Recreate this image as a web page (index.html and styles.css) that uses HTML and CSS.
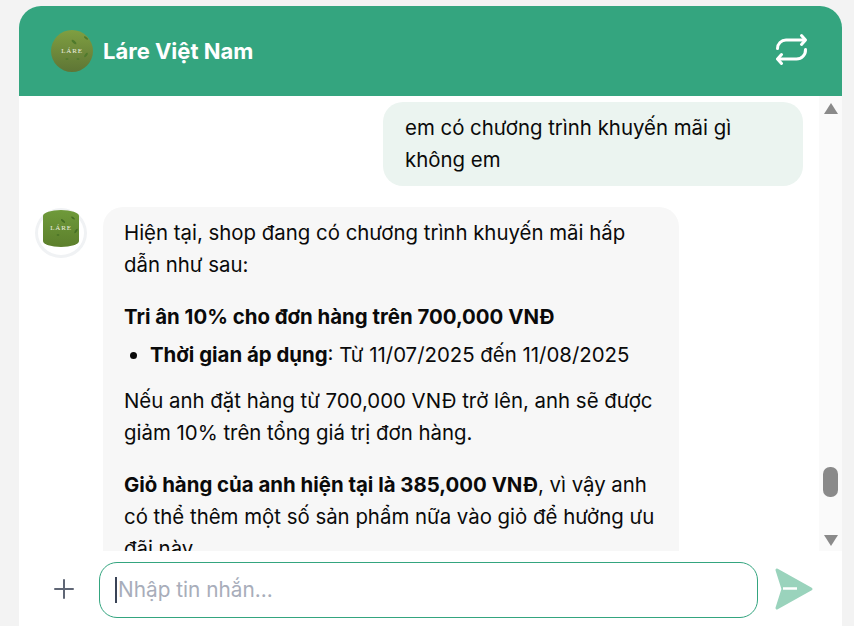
FILE: index.html
```html
<!DOCTYPE html>
<html lang="vi">
<head>
  <meta charset="UTF-8">
  <title>Láre Việt Nam</title>
  <link rel="stylesheet" href="styles.css">
</head>
<body>
  <div class="chat">
    <div class="header">
      <div class="brand">
        <svg class="logo" width="42" height="42" viewBox="0 0 42 42">
          <defs>
            <linearGradient id="logoBg" x1="0" y1="0" x2="0" y2="1">
              <stop offset="0" stop-color="#7f9f41"/>
              <stop offset="1" stop-color="#5e7535"/>
            </linearGradient>
          </defs>
          <circle cx="21" cy="21" r="21" fill="url(#logoBg)"/>
          <ellipse cx="23" cy="12" rx="3" ry="1.2" fill="#4f7a2c" transform="rotate(40 23 12)"/>
          <ellipse cx="35" cy="8" rx="2.4" ry="1" fill="#4f7a2c" transform="rotate(35 35 8)"/>
          <ellipse cx="35" cy="25" rx="2.6" ry="1.1" fill="#4f7a2c" transform="rotate(-50 35 25)"/>
          <ellipse cx="16" cy="29" rx="1.6" ry="0.8" fill="#4f7a2c"/>
          <ellipse cx="27" cy="29" rx="1.6" ry="0.8" fill="#4f7a2c"/>
          <text class="logo-text" x="21" y="23" text-anchor="middle">LÁRE</text>
        </svg>
        <div class="name">Láre Việt Nam</div>
      </div>
      <svg class="refresh" width="34" height="32" viewBox="0 0 34 32" fill="none" stroke="#fff" stroke-width="3" stroke-linecap="round" stroke-linejoin="round">
        <path d="M25.500 2.500l4 4.500-4 4.500"/>
        <path d="M1.500 15.500a8.500 8.500 0 0 1 8.500-8.500h18.500"/>
        <path d="M5.500 21.500l-4 4.500 4 4.500"/>
        <path d="M29.500 16.500a9 9 0 0 1-9 9.500H2.500"/>
      </svg>
    </div>
    <div class="body">
      <div class="messages">
        <div class="msg-user">em có chương trình khuyến mãi gì không em</div>
        <div class="msg-bot">
          <div class="avatar">
            <svg class="avatar-img" width="36" height="37" viewBox="0 0 36 37">
              <defs>
                <linearGradient id="avatarBg" x1="0" y1="0" x2="0" y2="1">
                  <stop offset="0" stop-color="#6f9a3a"/>
                  <stop offset="1" stop-color="#5c7f2c"/>
                </linearGradient>
              </defs>
              <rect width="36" height="37" fill="url(#avatarBg)"/>
              <ellipse cx="20" cy="11" rx="2.600" ry="1" fill="#456f25" transform="rotate(40 20 11)"/>
              <ellipse cx="30" cy="8" rx="2.200" ry="0.900" fill="#456f25" transform="rotate(35 30 8)"/>
              <ellipse cx="33" cy="21" rx="2.600" ry="1" fill="#456f25" transform="rotate(-55 33 21)"/>
              <ellipse cx="15" cy="25" rx="1.400" ry="0.700" fill="#456f25"/>
              <text class="logo-text" x="18" y="20" text-anchor="middle">LÁRE</text>
            </svg>
          </div>
          <div class="bubble">
            <p>Hiện tại, shop đang có chương trình khuyến mãi hấp dẫn như sau:</p>
            <p class="title"><strong>Tri ân 10% cho đơn hàng trên 700,000 VNĐ</strong></p>
            <ul>
              <li><strong>Thời gian áp dụng</strong>: Từ 11/07/2025 đến 11/08/2025</li>
            </ul>
            <p>Nếu anh đặt hàng từ 700,000 VNĐ trở lên, anh sẽ được giảm 10% trên tổng giá trị đơn hàng.</p>
            <p><strong>Giỏ hàng của anh hiện tại là 385,000 VNĐ</strong>, vì vậy anh có thể thêm một số sản phẩm nữa vào giỏ để hưởng ưu đãi này.</p>
          </div>
        </div>
      </div>
      <div class="scrollbar">
        <div class="arrow-up"></div>
        <div class="track"><div class="thumb"></div></div>
        <div class="arrow-down"></div>
      </div>
    </div>
    <div class="footer">
      <svg class="plus" width="22" height="22" viewBox="0 0 22 22" stroke="#5f6675" stroke-width="2" stroke-linecap="round">
        <path d="M11 2v18M2 11h18"/>
      </svg>
      <div class="input"><span class="caret"></span><span class="placeholder">Nhập tin nhắn...</span></div>
      <svg class="send" width="40" height="44" viewBox="0 0 40 44">
        <path d="M3 3l34 19L3 41l6-19z" fill="#9ad3bc" stroke="#9ad3bc" stroke-width="3" stroke-linejoin="round"/>
        <path d="M9 21.500h14" stroke="#fff" stroke-width="2.500"/>
      </svg>
    </div>
  </div>
</body>
</html>
```
FILE: styles.css
```css
* {
  box-sizing: border-box;
}
html, body {
  margin: 0;
  height: 100%;
}
body {
  font-family: "Inter", "Noto Sans", sans-serif;
  background-color: #f3f3f3;
  color: #0a0a0a;
  overflow: hidden;
}
.chat {
  margin: 6px 12px 0 19px;
  height: 620px;
  background-color: #fff;
  border-radius: 22px 22px 0 0;
  display: flex;
  flex-direction: column;
}
.header {
  height: 90px;
  flex: none;
  background-color: #34a57f;
  border-radius: 22px 22px 0 0;
  padding: 0 32px;
  display: flex;
  align-items: center;
  justify-content: space-between;
}
.brand {
  display: flex;
  align-items: center;
  gap: 10px;
}
.logo {
  display: block;
}
.logo-text {
  font-family: "Liberation Serif", serif;
  font-size: 7px;
  letter-spacing: 0.8px;
  fill: #eef0e2;
}
.name {
  font-size: 22px;
  font-weight: 700;
  color: #fff;
}
.refresh {
  margin-top: -4px;
}
.body {
  flex: 1;
  min-height: 0;
  display: flex;
  overflow: hidden;
}
.messages {
  flex: 1;
  overflow: hidden;
  padding-top: 6px;
}
.msg-user {
  width: 420px;
  margin: 0 16px 21px auto;
  padding: 10px 22px;
  background-color: #ebf4f0;
  border-radius: 20px;
  font-size: 20.4px;
  line-height: 32px;
}
.msg-bot {
  display: flex;
  gap: 16px;
  padding-left: 16px;
}
.avatar {
  width: 52px;
  height: 50px;
  margin-top: 1px;
  flex: none;
  border-radius: 50%;
  border: 3px solid #f0f2f4;
  display: flex;
  justify-content: center;
}
.avatar-img {
  border-radius: 50% / 16%;
  margin-top: -1px;
}
.bubble {
  width: 576px;
  padding: 10px 22px 10px 21px;
  background-color: #f7f7f7;
  border-radius: 20px;
  font-size: 20.4px;
  line-height: 32px;
}
.bubble p {
  margin: 0 0 20px;
}
.bubble p.title {
  margin-bottom: 6px;
}
.bubble ul {
  margin: 0 0 14px;
  padding-left: 26px;
}
.scrollbar {
  width: 23px;
  flex: none;
  height: 455px;
  padding: 7px 4px 5px;
  background-color: #fafafa;
  display: flex;
  flex-direction: column;
  align-items: center;
}
.arrow-up {
  border: 7px solid transparent;
  border-top: 0;
  border-bottom: 11px solid #8a8a8a;
}
.arrow-down {
  border: 7px solid transparent;
  border-bottom: 0;
  border-top: 11px solid #8a8a8a;
}
.track {
  flex: 1;
  width: 100%;
  display: flex;
  flex-direction: column;
  justify-content: flex-end;
  padding-bottom: 38px;
}
.thumb {
  height: 30px;
  background-color: #8a8a8a;
  border-radius: 7px;
}
.footer {
  height: 75px;
  flex: none;
  display: flex;
  align-items: center;
  padding: 0 28px 0 34px;
}
.input {
  width: 659px;
  height: 56px;
  margin: 2px 16px 0 24px;
  border: 1px solid #34a57f;
  border-radius: 18px;
  padding: 0 15px;
  display: flex;
  align-items: center;
  font-size: 20.8px;
}
.caret {
  width: 2px;
  height: 26px;
  background-color: #3a4356;
  margin-right: 1px;
}
.placeholder {
  color: #a8adba;
}
```
